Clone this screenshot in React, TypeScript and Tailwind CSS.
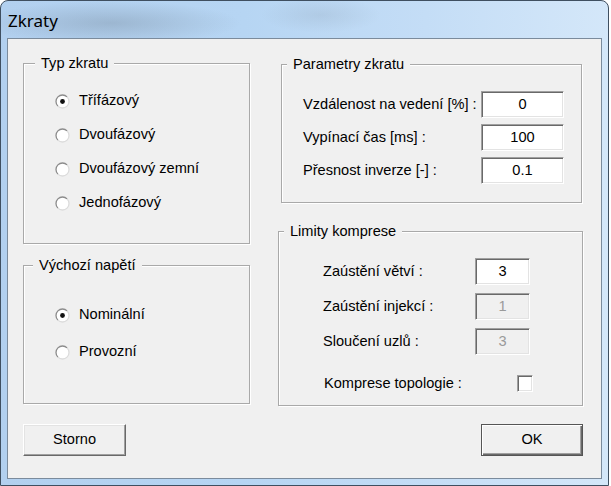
import React from "react";

function Radio({ checked }: { checked?: boolean }) {
  return (
    <svg width="15" height="15" viewBox="0 0 15 15" className="shrink-0">
      <circle cx="7.5" cy="7.5" r="6.5" fill="#ffffff" />
      <path d="M 2.9 12.1 A 6.5 6.5 0 0 1 12.1 2.9" stroke="#8c8c8c" strokeWidth="1.3" fill="none" />
      <path d="M 12.1 2.9 A 6.5 6.5 0 0 1 2.9 12.1" stroke="#dcdcdc" strokeWidth="1.3" fill="none" />
      {checked && <circle cx="7.5" cy="7.5" r="2.4" fill="#111111" />}
    </svg>
  );
}

function RadioRow({ label, checked }: { label: string; checked?: boolean }) {
  return (
    <div className="flex h-[34px] items-center gap-[9px]">
      <Radio checked={checked} />
      <span className="whitespace-nowrap">{label}</span>
    </div>
  );
}

function GroupBox({
  title,
  titleMl,
  className,
  children,
}: {
  title: string;
  titleMl: string;
  className: string;
  children: React.ReactNode;
}) {
  return (
    <div
      className={`flex flex-col border border-[#a9a9a9] shadow-[inset_1px_1px_0_#ffffff,1px_1px_0_#ffffff] ${className}`}
    >
      <div className={`-mt-[9px] self-start whitespace-nowrap bg-[#f0f0f0] px-[6px] leading-[17px] ${titleMl}`}>{title}</div>
      {children}
    </div>
  );
}

function Field({ value, width, disabled }: { value: string; width: string; disabled?: boolean }) {
  return (
    <div
      className={`flex h-[27px] shrink-0 items-center justify-center border border-t-[#a0a0a0] border-l-[#a0a0a0] border-r-white border-b-white shadow-[inset_1px_1px_0_#696969,inset_-1px_-1px_0_#e3e3e3] ${width} ${
        disabled ? "bg-[#f0f0f0] text-[#9a9a9a]" : "bg-white text-black"
      }`}
    >
      {value}
    </div>
  );
}

function Checkbox() {
  return (
    <div className="h-[17px] w-[16px] border border-t-[#a0a0a0] border-l-[#a0a0a0] border-r-white border-b-white bg-white shadow-[inset_1px_1px_0_#696969,inset_-1px_-1px_0_#e3e3e3]" />
  );
}

export default function App() {
  return (
    <div className="h-[486px] w-[611px] overflow-hidden bg-white font-['Liberation_Sans',Arial,sans-serif] text-[14.6px] text-black">
      <div className="flex h-[486px] w-[609px] flex-col rounded-t-[8px] border border-[#3f4f60] bg-[radial-gradient(ellipse_130px_22px_at_110px_22px,rgba(95,110,125,0.28),transparent),radial-gradient(ellipse_60px_18px_at_320px_14px,rgba(110,125,140,0.15),transparent),linear-gradient(90deg,#b2d0ef_0%,#b6d5f3_40%,#c4ddf6_70%,#d4e7f9_100%)]">
        <div className="flex h-[37px] items-center pl-[7px] font-['Noto_Sans','Open_Sans',sans-serif] text-[17px] text-black">
          <span className="mt-[2px]">Zkraty</span>
        </div>
        <div className="flex flex-1 flex-col px-[6px] pb-[6px]">
          <div className="flex flex-1 flex-col border border-[#7b8b9c] bg-[#f0f0f0] pt-[24px]">
            <div className="flex pl-[15px]">
              <div className="flex w-[227px] flex-col">
                <GroupBox title="Typ zkratu" titleMl="ml-[11px]" className="h-[181px]">
                  <div className="mt-[12px] flex flex-col pl-[31px]">
                    <RadioRow label="Třífázový" checked />
                    <RadioRow label="Dvoufázový" />
                    <RadioRow label="Dvoufázový zemní" />
                    <RadioRow label="Jednofázový" />
                  </div>
                </GroupBox>
                <GroupBox title="Výchozí napětí" titleMl="ml-[9px]" className="mt-[21px] h-[139px]">
                  <div className="mt-[24px] flex flex-col gap-[3px] pl-[31px]">
                    <RadioRow label="Nominální" checked />
                    <RadioRow label="Provozní" />
                  </div>
                </GroupBox>
              </div>
              <div className="ml-[28px] flex flex-col">
                <GroupBox title="Parametry zkratu" titleMl="ml-[5px]" className="ml-[3px] mt-[1px] h-[139px] w-[301px]">
                  <div className="mt-[18px] flex flex-col gap-[6px] pl-[21px] pr-[17px]">
                    <div className="flex h-[27px] items-center justify-between">
                      <span className="whitespace-nowrap">Vzdálenost na vedení [%] :</span>
                      <Field value="0" width="w-[83px]" />
                    </div>
                    <div className="flex h-[27px] items-center justify-between">
                      <span className="whitespace-nowrap">Vypínací čas [ms] :</span>
                      <Field value="100" width="w-[83px]" />
                    </div>
                    <div className="flex h-[27px] items-center justify-between">
                      <span className="whitespace-nowrap">Přesnost inverze [-] :</span>
                      <Field value="0.1" width="w-[83px]" />
                    </div>
                  </div>
                </GroupBox>
                <GroupBox title="Limity komprese" titleMl="ml-[5px]" className="mt-[28px] h-[175px] w-[305px]">
                  <div className="mt-[18px] flex flex-col gap-[8px] pl-[44px] pr-[52px]">
                    <div className="flex h-[27px] items-center justify-between">
                      <span className="whitespace-nowrap">Zaústění větví :</span>
                      <Field value="3" width="w-[55px]" />
                    </div>
                    <div className="flex h-[27px] items-center justify-between">
                      <span className="whitespace-nowrap">Zaústění injekcí :</span>
                      <Field value="1" width="w-[55px]" disabled />
                    </div>
                    <div className="flex h-[27px] items-center justify-between">
                      <span className="whitespace-nowrap">Sloučení uzlů :</span>
                      <Field value="3" width="w-[55px]" disabled />
                    </div>
                    <div className="mt-[7px] flex h-[27px] items-center justify-between">
                      <span className="ml-[1px] whitespace-nowrap">Komprese topologie :</span>
                      <div className="-mr-[3px]">
                        <Checkbox />
                      </div>
                    </div>
                  </div>
                </GroupBox>
              </div>
            </div>
            <div className="mt-[18px] flex justify-between pl-[15px] pr-[18px]">
              <button className="flex h-[32px] w-[103px] items-center justify-center border border-t-white border-l-white border-r-[#696969] border-b-[#696969] bg-[#f0f0f0] shadow-[inset_-1px_-1px_0_#a0a0a0,inset_1px_1px_0_#e3e3e3]">
                Storno
              </button>
              <button className="flex h-[32px] w-[102px] items-center justify-center border border-[#555555] bg-[#f0f0f0] shadow-[inset_1px_1px_0_#ffffff,inset_-1px_-1px_0_#696969,inset_-2px_-2px_0_#a0a0a0]">
                OK
              </button>
            </div>
          </div>
        </div>
      </div>
    </div>
  );
}
